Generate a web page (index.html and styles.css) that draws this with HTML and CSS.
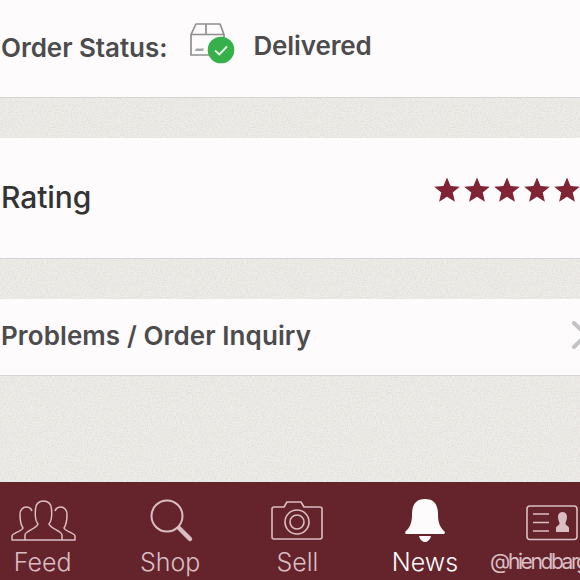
FILE: index.html
```html
<!DOCTYPE html>
<html lang="en">
    <head>
        <meta charset="UTF-8" />
        <title>Order</title>
        <link rel="stylesheet" href="styles.css">
    </head>
    <body>
        <div class="page">
            <div class="card status-card">
                <span class="status-label">Order Status:</span>
                <svg class="status-icon" width="46" height="42" viewBox="0 0 46 42">
                    <path d="M2 12.5 L7 2 H31 L35 12.5 V33 H2 Z M2 12.5 H35 M17 2.5 V12.5" fill="none" stroke="#8f8f8f" stroke-width="1.7" stroke-linejoin="round"/>
                    <path d="M7 26.5 H15 L14 29 H6 Z" fill="#a5a5a5"/>
                    <circle cx="32" cy="28" r="13.3" fill="#35b04b"/>
                    <path d="M26 28.5 L30.3 32.5 L38 24.5" fill="none" stroke="#e8f6ea" stroke-width="1.9"/>
                </svg>
                <span class="status-value">Delivered</span>
            </div>
            <div class="card rating-card">
                <span class="rating-label">Rating</span>
                <div class="stars">
                    <svg width="26" height="26" viewBox="0 0 24 24"><use href="#star"/></svg>
                    <svg width="26" height="26" viewBox="0 0 24 24"><use href="#star"/></svg>
                    <svg width="26" height="26" viewBox="0 0 24 24"><use href="#star"/></svg>
                    <svg width="26" height="26" viewBox="0 0 24 24"><use href="#star"/></svg>
                    <svg width="26" height="26" viewBox="0 0 24 24"><use href="#star"/></svg>
                </div>
            </div>
            <div class="card inquiry-card">
                <span class="inquiry-label">Problems / Order Inquiry</span>
                <svg class="chevron" width="8" height="30" viewBox="0 0 8 30">
                    <path d="M2 2 L14 14 M2 26 L14 14" fill="none" stroke="#c3c2c4" stroke-width="4" stroke-linecap="round"/>
                </svg>
            </div>
        </div>

        <nav class="tabs">
            <div class="tab">
                <svg width="66" height="46" viewBox="0 0 66 46" fill="none" stroke="#d9bfc3" stroke-width="1.5" stroke-linejoin="round">
                    <path d="M15 43 H2 V39 C2 36 11 35 13 31 C10 27 10 22 10 17 C10 13 13 10 16 10 C19 10 21 11 22 14"/>
                    <path d="M52 43 H65 V39 C65 36 56 35 54 31 C57 27 57 22 57 17 C57 13 54 10 51 10 C48 10 46 11 45 14"/>
                    <path d="M15 43 V38 C15 34 26 32 28 27 C24 22 25.500 15 25.500 12 C25.500 7 29 4 33.500 4 C38 4 41.500 7 41.500 12 C41.500 15 43 22 39 27 C41 32 52 34 52 38 V43 Z"/>
                </svg>
                <span>Feed</span>
            </div>
            <div class="tab">
                <svg width="66" height="46" viewBox="0 0 66 46" fill="none" stroke="#d9bfc3">
                    <circle cx="30" cy="19" r="15.500" stroke-width="2"/>
                    <path d="M42 31 L53 42" stroke-width="4.500" stroke-linecap="round"/>
                </svg>
                <span>Shop</span>
            </div>
            <div class="tab">
                <svg width="66" height="46" viewBox="0 0 66 46" fill="none" stroke="#d9bfc3" stroke-width="1.6" stroke-linejoin="round">
                    <path d="M10 10 H20 L23 5 H37 L40 10 H56 C57 10 58 11 58 12 V40 C58 41 57 42 56 42 H10 C9 42 8 41 8 40 V12 C8 11 9 10 10 10 Z"/>
                    <circle cx="33" cy="25" r="12"/>
                    <circle cx="33" cy="25" r="7"/>
                </svg>
                <span>Sell</span>
            </div>
            <div class="tab tab-active">
                <svg width="66" height="46" viewBox="0 0 66 46">
                    <path d="M33 2 C43 2 46 9 46 17 C46 26 48 30 52 34 C53.500 35.500 53 37 51 37 H15 C13 37 12.500 35.500 14 34 C18 30 20 26 20 17 C20 9 23 2 33 2 Z" fill="#fdfbfc"/>
                    <path d="M27 39 H39 C38 43 35 45 33 45 C31 45 28 43 27 39 Z" fill="#fdfbfc"/>
                </svg>
                <span>News</span>
            </div>
            <div class="tab tab-profile">
                <svg width="66" height="46" viewBox="0 0 66 46" fill="none">
                    <rect x="8" y="9" width="50" height="33.500" rx="3" stroke="#d9bfc3" stroke-width="1.6"/>
                    <path d="M14 17 H30 M14 25.500 H30 M14 34 H30" stroke="#d9bfc3" stroke-width="1.5"/>
                    <path d="M43.500 15 C47 15 48 18 48 20 C48 23 46.500 25 46.500 26.500 C46.500 28.500 50 29 50 31 V35 H37 V31 C37 29 40.500 28.500 40.500 26.500 C40.500 25 39 23 39 20 C39 18 40 15 43.500 15 Z" fill="#d9bfc3"/>
                </svg>
                <span>@hiendbarg</span>
            </div>
        </nav>

        <svg class="defs" width="0" height="0">
            <symbol id="star" viewBox="0 0 24 24">
                <path d="M12 .5 L15.300 8.200 L23.800 8.900 L17.300 14.400 L19.300 22.800 L12 18.300 L4.700 22.800 L6.700 14.400 L.2 8.900 L8.700 8.200 Z" fill="#7f2335"/>
            </symbol>
        </svg>
    </body>
</html>
```

FILE: styles.css
```css
html, body {
  margin: 0;
  height: 100%;
}

body {
  width: 580px;
  height: 580px;
  overflow: hidden;
  display: flex;
  flex-direction: column;
  font-family: "Inter", "Open Sans", sans-serif;
  background-color: #eeece8;
  background-image: url("data:image/svg+xml,%3Csvg xmlns='http://www.w3.org/2000/svg' width='200' height='200'%3E%3Cfilter id='n'%3E%3CfeTurbulence type='fractalNoise' baseFrequency='.8' numOctaves='2'/%3E%3CfeColorMatrix values='0 0 0 0 .55 0 0 0 0 .53 0 0 0 0 .48 .8 0 0 0 -.33'/%3E%3C/filter%3E%3Crect width='200' height='200' filter='url(%23n)'/%3E%3C/svg%3E");
}

.page {
  flex: 1;
  display: flex;
  flex-direction: column;
  gap: 40px;
}

.card {
  background: #fdfbfc;
  border-bottom: 1.5px solid #d6d4d1;
  display: flex;
  align-items: center;
  padding-left: 1px;
  box-sizing: border-box;
}

.status-card {
  height: 97.5px;
}

.status-label {
  font-size: 26px;
  font-weight: 600;
  letter-spacing: -0.05px;
  color: #4c4b4d;
  margin-top: -2px;
}

.status-icon {
  margin-left: 22px;
  margin-top: -10px;
}

.status-value {
  font-size: 26px;
  font-weight: 600;
  letter-spacing: -0.1px;
  color: #4c4b4d;
  margin-left: 18px;
  margin-top: -6px;
}

.rating-card {
  height: 121px;
  justify-content: space-between;
}

.rating-label {
  font-size: 30px;
  font-weight: 500;
  letter-spacing: -0.1px;
  color: #333234;
  margin-top: -2px;
}

.stars {
  display: flex;
  gap: 4px;
  margin-top: -16px;
  flex-shrink: 0;
}

.inquiry-card {
  height: 77px;
  justify-content: space-between;
}

.inquiry-label {
  font-size: 26px;
  font-weight: 600;
  letter-spacing: 0.1px;
  color: #4c4b4d;
  margin-top: -2px;
}

.chevron {
  margin-top: -2px;
}

.tabs {
  height: 98px;
  width: 637px;
  margin-left: -21px;
  box-sizing: border-box;
  padding-top: 15px;
  background: #65232b;
  display: grid;
  grid-template-columns: repeat(5, 1fr);
  color: #d9bfc3;
  font-size: 25px;
  font-weight: 300;
}

.tab {
  display: flex;
  flex-direction: column;
  align-items: center;
  line-height: 30px;
  white-space: nowrap;
}

.tab svg {
  flex-shrink: 0;
}

.tab span {
  margin-top: 4px;
}

.tab-active {
  color: #fdfbfc;
}

.tab-profile span {
  font-size: 21px;
  font-weight: 400;
  letter-spacing: -2.4px;
  margin-right: 28px;
}

.defs {
  position: absolute;
}
```
